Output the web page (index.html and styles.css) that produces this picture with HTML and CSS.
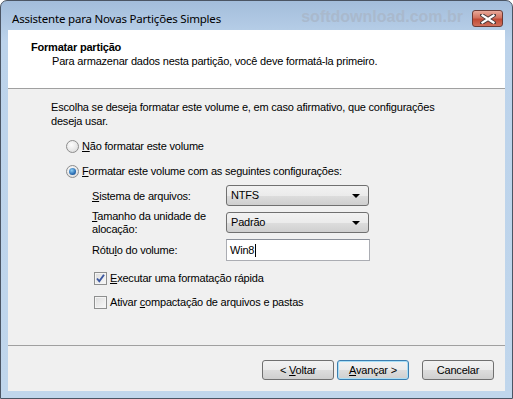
FILE: index.html
```html
<!DOCTYPE html>
<html lang="pt-BR">
<head>
  <meta charset="UTF-8" />
  <title>Assistente para Novas Partições Simples</title>
  <link rel="stylesheet" href="styles.css">
</head>
<body>
  <div class="window">
    <div class="titlebar">
      <span class="title">Assistente para Novas Partições Simples</span>
      <span class="watermark">softdownload.com.br</span>
      <div class="close">
        <svg width="16" height="10" viewBox="0 0 16 10">
          <path d="M2 1 L14 9 M14 1 L2 9" stroke="#4a3a3a" stroke-width="4" stroke-linecap="square"/>
          <path d="M2.5 1.5 L13.5 8.5 M13.5 1.5 L2.5 8.5" stroke="#fff" stroke-width="2.2" stroke-linecap="square"/>
        </svg>
      </div>
    </div>

    <div class="client">
      <div class="header">
        <p class="heading">Formatar partição</p>
        <p class="subheading">Para armazenar dados nesta partição, você deve formatá-la primeiro.</p>
      </div>

      <div class="content">
        <p class="intro">Escolha se deseja formatar este volume e, em caso afirmativo, que configurações<br>deseja usar.</p>

        <div class="option first">
          <span class="radio"></span>
          <span><u>N</u>ão formatar este volume</span>
        </div>
        <div class="option">
          <span class="radio checked"></span>
          <span><u>F</u>ormatar este volume com as seguintes configurações:</span>
        </div>

        <div class="settings">
          <div class="field">
            <label><u>S</u>istema de arquivos:</label>
            <div class="combo">NTFS<span class="arrow"></span></div>
          </div>
          <div class="field tall">
            <label><u>T</u>amanho da unidade de<br>alocação:</label>
            <div class="combo">Padrão<span class="arrow"></span></div>
          </div>
          <div class="field">
            <label>Rótu<u>l</u>o do volume:</label>
            <div class="textbox">Win8<span class="caret"></span></div>
          </div>
        </div>

        <div class="check first">
          <span class="box">
            <svg width="11" height="11" viewBox="0 0 11 11">
              <path d="M2 5.5 L4.3 8.3 L9 1.8" fill="none" stroke="#3b57a0" stroke-width="1.9"/>
            </svg>
          </span>
          <span><u>E</u>xecutar uma formatação rápida</span>
        </div>
        <div class="check">
          <span class="box"></span>
          <span>Ativar <u>c</u>ompactação de arquivos e pastas</span>
        </div>
      </div>

      <div class="footer">
        <button class="btn">&lt; <u>V</u>oltar</button>
        <button class="btn default"><u>A</u>vançar &gt;</button>
        <button class="btn cancel">Cancelar</button>
      </div>
    </div>
  </div>
</body>
</html>
```

FILE: styles.css
```css
body {
  margin: 0;
  background: #fff;
  font-family: "Liberation Sans", Arial, sans-serif;
  font-size: 11px;
  letter-spacing: -0.2px;
  color: #000;
}
p {
  margin: 0;
}
.window {
  width: 513px;
  height: 399px;
  box-sizing: border-box;
  border: 1px solid #4b5564;
  border-radius: 7px 7px 0 0;
  background: linear-gradient(#a3bddb, #bcd3eb 40px, #c0d6ec);
  padding: 0 7px 7px;
  display: flex;
  flex-direction: column;
}
.titlebar {
  height: 29px;
  flex: none;
  display: flex;
  align-items: flex-start;
  padding: 0 2px 0 4px;
}
.title {
  font-family: "Noto Sans", sans-serif;
  font-size: 11.5px;
  letter-spacing: -0.2px;
  color: #000;
  margin-top: 10px;
}
.watermark {
  margin-left: auto;
  margin-top: 7px;
  font-family: "Liberation Sans", Arial, sans-serif;
  font-weight: bold;
  font-size: 16px;
  letter-spacing: 0;
  color: #a9b9cd;
}
.close {
  width: 31px;
  height: 17px;
  box-sizing: border-box;
  margin: 9px 0 0 9px;
  border: 1px solid #6b3b36;
  border-radius: 3px;
  background: linear-gradient(#e8a999, #d2725f 45%, #c14a35 55%, #d0705c);
  display: flex;
  align-items: center;
  justify-content: center;
}
.client {
  flex: 1;
  background: #f0f0f0;
  display: flex;
  flex-direction: column;
}
.header {
  height: 59px;
  flex: none;
  box-sizing: border-box;
  background: #fff;
  border-bottom: 1px solid #a0a0a0;
  padding: 10px 0 0 23px;
  line-height: 14px;
}
.heading {
  font-weight: bold;
}
.subheading {
  padding-left: 21px;
}
.content {
  flex: 1;
  padding: 11px 20px 0 43px;
  line-height: 14px;
}
.option {
  display: flex;
  align-items: center;
  height: 18px;
  margin-top: 7px;
  padding-left: 15px;
  gap: 3px;
}
.option.first {
  margin-top: 9px;
}
.radio {
  width: 13px;
  height: 13px;
  box-sizing: border-box;
  border-radius: 50%;
  border: 1px solid #8d8d8d;
  background: radial-gradient(circle at 40% 35%, #fdfdfd, #e6e6e6 60%, #d6d6d6);
  display: flex;
  align-items: center;
  justify-content: center;
}
.radio.checked::after {
  content: "";
  width: 7px;
  height: 7px;
  border-radius: 50%;
  background: radial-gradient(circle at 40% 35%, #8fd0f5, #2a6db3 60%, #133e74);
}
.settings {
  margin: 5px 0 0 41px;
  display: flex;
  flex-direction: column;
  gap: 3px;
}
.field {
  display: flex;
  align-items: center;
  min-height: 21px;
}
.field label {
  width: 134px;
  flex: none;
}
.field.tall {
  height: 27px;
}
.field.tall label {
  line-height: 13px;
}
.combo {
  position: relative;
  width: 143px;
  height: 21px;
  box-sizing: border-box;
  border: 1px solid #707070;
  border-radius: 3px;
  background: linear-gradient(#f2f2f2, #ebebeb 50%, #dddddd 51%, #cfcfcf);
  padding: 0 0 0 4px;
  line-height: 19px;
}
.arrow {
  position: absolute;
  right: 8px;
  top: 8px;
  border-left: 4px solid transparent;
  border-right: 4px solid transparent;
  border-top: 4px solid #000;
}
.textbox {
  width: 144px;
  height: 22px;
  box-sizing: border-box;
  border: 1px solid #abadb3;
  border-top-color: #8a8f99;
  background: #fff;
  padding: 0 0 0 3px;
  line-height: 20px;
  display: flex;
  align-items: center;
}
.caret {
  width: 1px;
  height: 13px;
  background: #000;
  margin-left: 1px;
}
.check {
  display: flex;
  align-items: center;
  height: 18px;
  margin-top: 6px;
  padding-left: 43px;
  gap: 3px;
}
.check.first {
  margin-top: 8px;
}
.box {
  width: 13px;
  height: 13px;
  box-sizing: border-box;
  border: 1px solid #8e8f8f;
  background: linear-gradient(135deg, #dcdcdc, #f9f9f9);
  box-shadow: inset 0 0 0 1px #f4f4f4;
  display: flex;
  align-items: center;
  justify-content: center;
}
.footer {
  height: 46px;
  flex: none;
  border-top: 1px solid #a0a0a0;
  display: flex;
  justify-content: flex-end;
  align-items: flex-start;
  padding: 14px 11px 0 0;
  box-sizing: border-box;
}
.btn {
  width: 72px;
  height: 20px;
  border: 1px solid #707070;
  border-radius: 3px;
  background: linear-gradient(#f2f2f2, #ebebeb 50%, #dddddd 51%, #cfcfcf);
  font-family: "Liberation Sans", Arial, sans-serif;
  font-size: 11px;
  letter-spacing: -0.2px;
  color: #000;
  padding: 0;
  margin-left: 3px;
}
.btn.default {
  border-color: #3c7fb1;
  box-shadow: inset 0 0 0 1px #a8def6;
}
.btn.cancel {
  margin-left: 13px;
}
```
